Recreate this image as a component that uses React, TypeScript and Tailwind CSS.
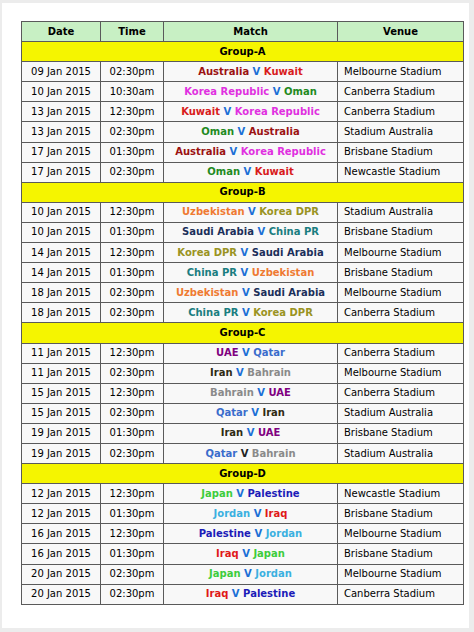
import React from "react";

const C: Record<string, string> = {
  Australia: "text-[#9b1212]",
  Kuwait: "text-[#d81c1c]",
  "Korea Republic": "text-[#e030e0]",
  Oman: "text-[#1f8a1f]",
  Uzbekistan: "text-[#ef7a32]",
  "Korea DPR": "text-[#9a9322]",
  "Saudi Arabia": "text-[#1b2f5a]",
  "China PR": "text-[#1a7d80]",
  UAE: "text-[#800080]",
  Qatar: "text-[#3a6ccc]",
  Iran: "text-[#2e2a12]",
  Bahrain: "text-[#8a8a8a]",
  Japan: "text-[#3ccc3c]",
  Palestine: "text-[#1c1cb8]",
  Jordan: "text-[#3bb0e0]",
  Iraq: "text-[#e01818]",
};

type Row = [string, string, string, string, string, string?];

const groups: { name: string; rows: Row[] }[] = [
  {
    name: "Group-A",
    rows: [
      ["09 Jan 2015", "02:30pm", "Australia", "Kuwait", "Melbourne Stadium"],
      ["10 Jan 2015", "10:30am", "Korea Republic", "Oman", "Canberra Stadium"],
      ["13 Jan 2015", "12:30pm", "Kuwait", "Korea Republic", "Canberra Stadium"],
      ["13 Jan 2015", "02:30pm", "Oman", "Australia", "Stadium Australia"],
      ["17 Jan 2015", "01:30pm", "Australia", "Korea Republic", "Brisbane Stadium"],
      ["17 Jan 2015", "02:30pm", "Oman", "Kuwait", "Newcastle Stadium"],
    ],
  },
  {
    name: "Group-B",
    rows: [
      ["10 Jan 2015", "12:30pm", "Uzbekistan", "Korea DPR", "Stadium Australia"],
      ["10 Jan 2015", "01:30pm", "Saudi Arabia", "China PR", "Brisbane Stadium"],
      ["14 Jan 2015", "12:30pm", "Korea DPR", "Saudi Arabia", "Melbourne Stadium"],
      ["14 Jan 2015", "01:30pm", "China PR", "Uzbekistan", "Brisbane Stadium"],
      ["18 Jan 2015", "02:30pm", "Uzbekistan", "Saudi Arabia", "Melbourne Stadium"],
      ["18 Jan 2015", "02:30pm", "China PR", "Korea DPR", "Canberra Stadium"],
    ],
  },
  {
    name: "Group-C",
    rows: [
      ["11 Jan 2015", "12:30pm", "UAE", "Qatar", "Canberra Stadium"],
      ["11 Jan 2015", "02:30pm", "Iran", "Bahrain", "Melbourne Stadium"],
      ["15 Jan 2015", "12:30pm", "Bahrain", "UAE", "Canberra Stadium"],
      ["15 Jan 2015", "02:30pm", "Qatar", "Iran", "Stadium Australia"],
      ["19 Jan 2015", "01:30pm", "Iran", "UAE", "Brisbane Stadium"],
      ["19 Jan 2015", "02:30pm", "Qatar", "Bahrain", "Stadium Australia", "dark"],
    ],
  },
  {
    name: "Group-D",
    rows: [
      ["12 Jan 2015", "12:30pm", "Japan", "Palestine", "Newcastle Stadium"],
      ["12 Jan 2015", "01:30pm", "Jordan", "Iraq", "Brisbane Stadium"],
      ["16 Jan 2015", "12:30pm", "Palestine", "Jordan", "Melbourne Stadium"],
      ["16 Jan 2015", "01:30pm", "Iraq", "Japan", "Brisbane Stadium"],
      ["20 Jan 2015", "02:30pm", "Japan", "Jordan", "Melbourne Stadium"],
      ["20 Jan 2015", "02:30pm", "Iraq", "Palestine", "Canberra Stadium"],
    ],
  },
];

const cell = "border border-[#5a5a5a] h-[20.1px] p-0 leading-none";

export default function App() {
  return (
    <div
      className="w-[474px] h-[632px] bg-[#ececec] pt-[3px] pl-[2px]"
      style={{ fontFamily: '"DejaVu Sans", Verdana, sans-serif' }}
    >
      <div className="w-[467px] h-[625px] bg-white pt-[18px] pl-[19px]">
        <table className="border-collapse text-[10px] text-[#000]">
          <colgroup>
            <col className="w-[79px]" />
            <col className="w-[63px]" />
            <col className="w-[174px]" />
            <col className="w-[126px]" />
          </colgroup>
          <thead>
            <tr className="bg-[#c8f0c4]">
              <th className={`${cell} font-bold text-center`}>Date</th>
              <th className={`${cell} font-bold text-center`}>Time</th>
              <th className={`${cell} font-bold text-center`}>Match</th>
              <th className={`${cell} font-bold text-center`}>Venue</th>
            </tr>
          </thead>
          <tbody>
            {groups.map((g) => (
              <React.Fragment key={g.name}>
                <tr className="bg-[#f5f500]">
                  <td colSpan={4} className={`${cell} font-bold text-center`}>
                    {g.name}
                  </td>
                </tr>
                {g.rows.map((r, i) => (
                  <tr key={i} className="bg-[#f8f8f8]">
                    <td className={`${cell} text-center`}>{r[0]}</td>
                    <td className={`${cell} text-center`}>{r[1]}</td>
                    <td className={`${cell} text-center font-bold`}>
                      <span className={C[r[2]]}>{r[2]}</span>{" "}
                      <span className={r[5] ? "text-[#222]" : "text-[#1c6fd6]"}>V</span>{" "}
                      <span className={C[r[3]]}>{r[3]}</span>
                    </td>
                    <td className={`${cell} text-left pl-[6px]`}>{r[4]}</td>
                  </tr>
                ))}
              </React.Fragment>
            ))}
          </tbody>
        </table>
      </div>
    </div>
  );
}
